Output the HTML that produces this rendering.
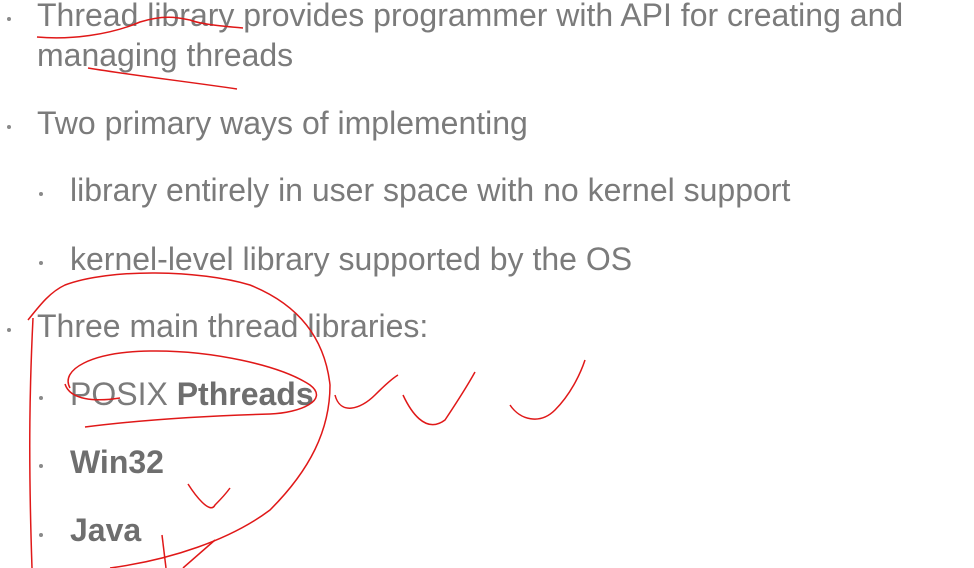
<!DOCTYPE html>
<html><head><style>
html,body{margin:0;padding:0;background:#fff;width:974px;height:568px;overflow:hidden}
.t{position:absolute;font-family:"Liberation Sans",Arial,sans-serif;font-size:32px;color:#7b7b7b;white-space:nowrap;line-height:1}
.b{position:absolute;width:4px;height:4px;border-radius:50%;background:#8a8a8a}
b{color:#6e6e6e}
</style></head><body>
<div class="b" style="left:7px;top:17px"></div>
<div class="t" style="left:37px;top:-1px">Thread library provides programmer with API for creating and</div>
<div class="t" style="left:37px;top:39px">managing threads</div>
<div class="b" style="left:7px;top:125px"></div>
<div class="t" style="left:37px;top:107px">Two primary ways of implementing</div>
<div class="b" style="left:39px;top:192px"></div>
<div class="t" style="left:70px;top:174px">library entirely in user space with no kernel support</div>
<div class="b" style="left:39px;top:261px"></div>
<div class="t" style="left:70px;top:243px">kernel-level library supported by the OS</div>
<div class="b" style="left:7px;top:328px"></div>
<div class="t" style="left:37px;top:310px">Three main thread libraries:</div>
<div class="b" style="left:39px;top:396px"></div>
<div class="t" style="left:70px;top:378px">POSIX <b>Pthreads</b></div>
<div class="b" style="left:39px;top:464px"></div>
<div class="t" style="left:70px;top:446px"><b>Win32</b></div>
<div class="b" style="left:39px;top:533px"></div>
<div class="t" style="left:70px;top:514px"><b>Java</b></div>
<svg width="974" height="568" style="position:absolute;left:0;top:0" fill="none" stroke="#e01818" stroke-width="1.5">
<path d="M37 37 C70 40 110 35 140 22 C165 14 180 18 190 20 C200 24 220 26 243 28"/>
<path d="M88 68 C130 75 190 82 237 89"/>
<path d="M28 320 C40 305 50 292 65 285 C110 268 200 270 250 285 C300 305 325 340 330 385 C330 430 310 470 270 510 C230 540 170 560 110 568"/>
<path d="M33 318 C30 380 28 450 32 568"/>
<path d="M70 388 C60 370 90 352 150 351 C210 350 280 365 310 385 C330 400 300 413 270 414 C200 416 140 420 85 427"/>
<path d="M65 384 C70 400 95 402 120 398"/>
<path d="M335 395 C340 415 360 410 375 395 C385 385 393 378 398 375"/>
<path d="M403 395 C410 410 425 435 445 420 C455 405 465 390 475 372"/>
<path d="M510 405 C520 420 540 425 555 410 C570 395 580 375 585 360"/>
<path d="M188 484 C195 495 210 515 215 505 C220 500 225 495 230 488"/>
<path d="M162 535 L166 568"/>
<path d="M183 568 L215 540"/>
</svg>
</body></html>
